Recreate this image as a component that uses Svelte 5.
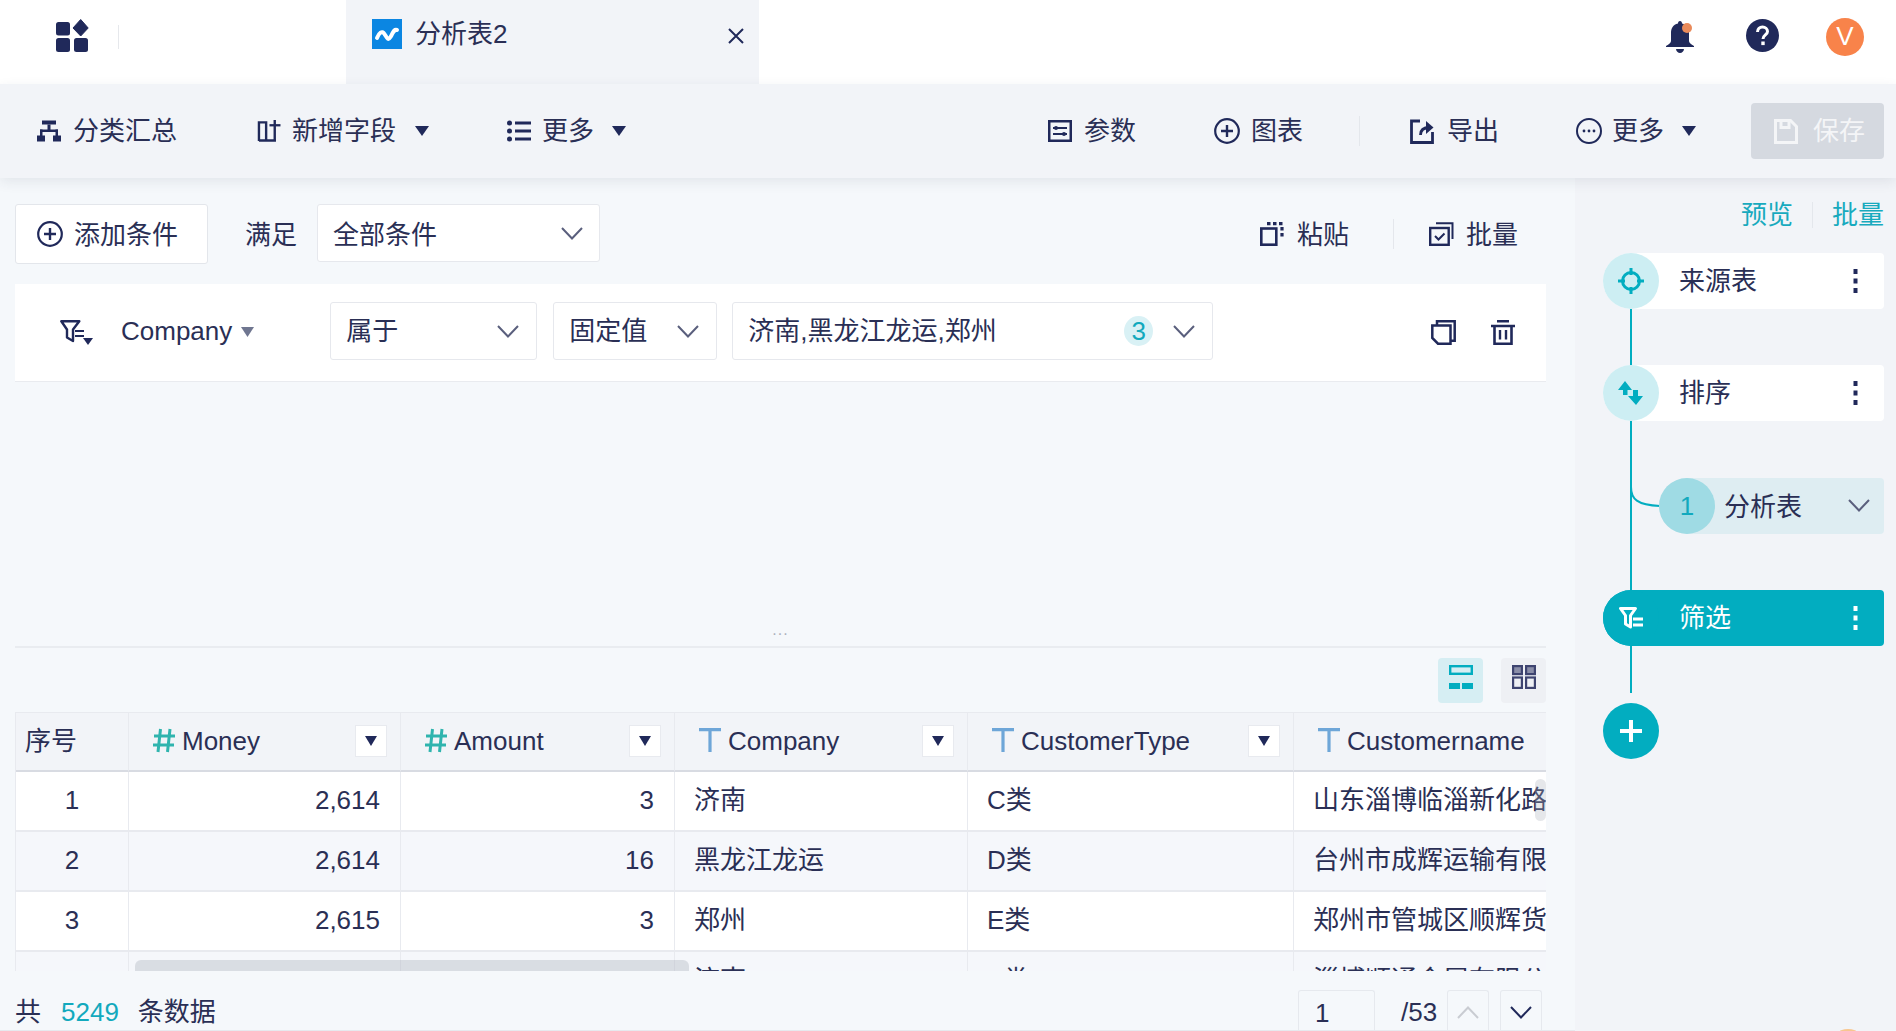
<script>
  const cols = [
    { name: 'Money', type: 'num', w: 272 },
    { name: 'Amount', type: 'num', w: 274 },
    { name: 'Company', type: 'text', w: 293 },
    { name: 'CustomerType', type: 'text', w: 326 },
    { name: 'Customername', type: 'text', w: 340, noMenu: true }
  ];
  const rows = [
    ['1', '2,614', '3', '济南', 'C类', '山东淄博临淄新化路运输有限公司'],
    ['2', '2,614', '16', '黑龙江龙运', 'D类', '台州市成辉运输有限公司'],
    ['3', '2,615', '3', '郑州', 'E类', '郑州市管城区顺辉货运有限公司'],
    ['4', '2,615', '3', '济南', 'F类', '淄博顺通金属有限公司']
  ];
</script>

{#snippet chevron(cls)}
  <svg class={cls} viewBox="0 0 22 13" fill="none" stroke="currentColor" stroke-width="2"><path d="M1 1l10 10.500L21 1"/></svg>
{/snippet}
{#snippet caret(cls)}
  <svg class="caret {cls}" viewBox="0 0 14 10"><path d="M0 0h14L7 10z" fill="#20295a"/></svg>
{/snippet}
{#snippet kebab(fill)}
  <svg class="kebab" viewBox="0 0 5 24" fill={fill}><rect x="0.500" y="0" width="4" height="5"/><rect x="0.500" y="9.500" width="4" height="5"/><rect x="0.500" y="19" width="4" height="5"/></svg>
{/snippet}

<div class="app">
  <header class="topbar">
    <div class="brand">
      <svg class="logo" viewBox="0 0 33 33" fill="#20295a">
        <rect x="0" y="3" width="14" height="13.500" rx="2.500"/>
        <rect x="18" y="19" width="14" height="14" rx="2.500"/>
        <rect x="0" y="19" width="14" height="14" rx="2.500"/>
        <path d="M24.700 0.500l7.500 8.500-7.500 8-7.700-8z" stroke="#20295a" stroke-linejoin="round"/>
      </svg>
      <span class="brand-rule"></span>
    </div>
    <div class="tab">
      <svg class="tab-icon" viewBox="0 0 30 30"><rect width="30" height="30" fill="#0b86e2"/><path d="M5 19c2-5 5-8 7.500-4s3.500 7 6 3 3-8 6.500-7" fill="none" stroke="#fff" stroke-width="4" stroke-linecap="round"/></svg>
      <span class="tab-title">分析表2</span>
      <svg class="tab-close" viewBox="0 0 16 16" fill="none" stroke="#20295a" stroke-width="2"><path d="M1 1l14 14M15 1L1 15"/></svg>
    </div>
    <div class="top-actions">
      <svg class="bell" viewBox="0 0 28 32"><path d="M14 0c1.400 0 2 1 2 2.500 5 1.200 7 5 7 9.500v8c0 2 2 3 5 5v1H0v-1c3-2 5-3 5-5v-8c0-4.500 2-8.300 7-9.500C12 1 12.600 0 14 0z" fill="#20295a"/><path d="M10 28h8c0 2-2 4-4 4s-4-2-4-4z" fill="#20295a"/><circle cx="21" cy="7" r="5" fill="#e98a5a"/></svg>
      <svg class="help" viewBox="0 0 33 33"><circle cx="16.500" cy="16.500" r="16.500" fill="#20295a"/><path d="M11.500 13c0-3 2.200-5 5-5s5 2 5 4.500c0 3.500-4.500 3.500-4.500 7.500" fill="none" stroke="#fff" stroke-width="3"/><rect x="15.300" y="22.500" width="3.400" height="3.600" fill="#fff"/></svg>
      <div class="avatar">V</div>
    </div>
  </header>

  <nav class="toolbar">
    <div class="tool-group">
      <div class="tool tool-sum">
        <svg class="ic" viewBox="0 0 24 21" fill="#20295a"><rect x="5" y="0" width="14" height="4"/><rect x="10.500" y="4" width="3" height="6"/><rect x="3" y="9" width="18" height="2.500"/><rect x="3" y="9" width="2.500" height="7"/><rect x="18.500" y="9" width="2.500" height="7"/><rect x="0" y="15" width="8" height="6"/><rect x="16" y="15" width="8" height="6"/></svg>
        <span>分类汇总</span>
      </div>
      <div class="tool tool-add">
        <svg class="ic" viewBox="0 0 24 23" fill="none" stroke="#20295a" stroke-width="2.500"><path d="M1.500 22V2.500h7.500v19M1.500 21.500h17.800M18 0v21.500"/><path d="M12.500 5.500H24" stroke-width="2.400"/></svg>
        <span>新增字段</span>
        {@render caret('caret-add')}
      </div>
      <div class="tool tool-more">
        <svg class="ic" viewBox="0 0 24 22" fill="#20295a"><circle cx="2.500" cy="3" r="2.500"/><circle cx="2.500" cy="11" r="2.500"/><circle cx="2.500" cy="19" r="2.500"/><rect x="8" y="1.500" width="16" height="3"/><rect x="8" y="9.500" width="16" height="3"/><rect x="8" y="17.500" width="16" height="3"/></svg>
        <span>更多</span>
        {@render caret('caret-more')}
      </div>
    </div>
    <div class="tool-group tool-right">
      <div class="tool tool-param">
        <svg class="ic" viewBox="0 0 24 22" fill="none" stroke="#20295a" stroke-width="2.500"><rect x="1.250" y="1.250" width="21.500" height="19.500"/><path d="M5 8h14M5 14h14" stroke-width="2"/><circle cx="8" cy="8" r="2" fill="#20295a" stroke="none"/><circle cx="16" cy="14" r="2" fill="#20295a" stroke="none"/></svg>
        <span>参数</span>
      </div>
      <div class="tool tool-chart">
        <svg class="ic ic-round" viewBox="0 0 26 26" fill="none" stroke="#20295a" stroke-width="2.200"><circle cx="13" cy="13" r="11.800"/><path d="M13 7v12M7 13h12" stroke-width="2.400"/></svg>
        <span>图表</span>
      </div>
      <span class="rule rule-tool"></span>
      <div class="tool tool-export">
        <svg class="ic ic-export" viewBox="0 0 24 25" fill="none" stroke="#20295a" stroke-width="2.800"><path d="M10 2H1.500v21.500H22.500V13"/><path d="M10.500 16c0-5 3-7.500 9-7.500"/><path d="M16 2l7.500 6.500-7.500 6.500z" fill="#20295a" stroke="none"/></svg>
        <span>导出</span>
      </div>
      <div class="tool tool-more2">
        <svg class="ic ic-round" viewBox="0 0 26 26" fill="none" stroke="#20295a" stroke-width="2"><circle cx="13" cy="13" r="12"/><g fill="#20295a" stroke="none"><circle cx="8" cy="13" r="1.400"/><circle cx="13" cy="13" r="1.400"/><circle cx="18" cy="13" r="1.400"/></g></svg>
        <span>更多</span>
        {@render caret('caret-more2')}
      </div>
      <button class="save">
        <svg class="ic" viewBox="0 0 24 25" fill="none" stroke="#f4f5f7" stroke-width="3"><path d="M1.500 1.500h15l6 6v16h-21z"/><path d="M7 2v6.500h8V2"/></svg>
        <span>保存</span>
      </button>
    </div>
  </nav>

  <div class="body">
    <main class="main">
      <div class="cond-head">
        <button class="add-btn">
          <svg class="ic-add" viewBox="0 0 26 26" fill="none" stroke="#20295a" stroke-width="2.200"><circle cx="13" cy="13" r="11.800"/><path d="M13 7v12M7 13h12" stroke-width="2.400"/></svg>
          <span>添加条件</span>
        </button>
        <span class="meet">满足</span>
        <div class="select sel-all"><span>全部条件</span>{@render chevron('chev')}</div>
        <div class="head-actions">
          <div class="tool">
            <svg class="ic ic-paste" viewBox="0 0 24 24" fill="none" stroke="#20295a" stroke-width="2.600"><rect x="1.300" y="6.500" width="15" height="16.200"/><path d="M7 1.700h3.500M13 1.700h3.500M19 1.700h3.500M22 5v3.500M22 11v3.500" stroke-width="3.200"/></svg>
            <span>粘贴</span>
          </div>
          <span class="rule rule-head"></span>
          <div class="tool tool-batch">
            <svg class="ic ic-batch" viewBox="0 0 25 24" fill="none" stroke="#20295a" stroke-width="2.400"><rect x="1.200" y="6" width="18.500" height="16.800"/><path d="M6 14l3.500 3.500 6-6" stroke-width="2"/><path d="M7 1.300h16.500V17" stroke-width="2"/></svg>
            <span>批量</span>
          </div>
        </div>
      </div>

      <section class="cond-card">
        <svg class="cond-icon" viewBox="0 0 33 25"><path d="M1.300 1.300h18L13 9.500v11.500l-6-3.500V9.500z" fill="none" stroke="#20295a" stroke-width="2.400" stroke-linejoin="round"/><path d="M15 11h9M15 16h9" stroke="#20295a" stroke-width="2.200"/><path d="M23 18h10l-5 7z" fill="#20295a"/></svg>
        <span class="field">Company</span>
        <svg class="field-caret" viewBox="0 0 13 10"><path d="M0 0h13L6.500 10z" fill="#6f7690"/></svg>
        <div class="select sel-op"><span>属于</span>{@render chevron('chev')}</div>
        <div class="select sel-kind"><span>固定值</span>{@render chevron('chev')}</div>
        <div class="select sel-val">
          <span class="val-text">济南,黑龙江龙运,郑州</span>
          <span class="badge">3</span>
          {@render chevron('chev')}
        </div>
        <svg class="act-copy" viewBox="0 0 25 25" fill="none" stroke="#20295a" stroke-width="2.500"><path d="M6 5V1.300h17.700v19.500H20"/><path d="M1.300 5.500H19.500v18.200H7l-5.700-5.700z"/></svg>
        <svg class="act-del" viewBox="0 0 24 25" fill="none" stroke="#20295a" stroke-width="2.600"><path d="M6 1.300h12M0 6h24" /><path d="M3.500 7v16.700h17V7"/><path d="M9 10v9.500M15 10v9.500" stroke-width="2.400"/></svg>
      </section>

      <div class="splitter"><span>...</span></div>

      <div class="views">
        <div class="view view-on">
          <svg viewBox="0 0 24 24" width="24" height="24"><rect x="1.200" y="1.200" width="21.600" height="7.600" fill="#d6eef3" stroke="#02adc0" stroke-width="2.400"/><rect x="0" y="18" width="11" height="6" fill="#02adc0"/><rect x="13" y="18" width="11" height="6" fill="#02adc0"/></svg>
        </div>
        <div class="view">
          <svg viewBox="0 0 24 24" width="24" height="24" fill="none" stroke="#3e4470" stroke-width="2.200"><rect x="1.100" y="1.100" width="8.800" height="8" fill="#8a8ea8"/><rect x="14.100" y="1.100" width="8.800" height="8" fill="#8a8ea8"/><rect x="1.100" y="12.500" width="8.800" height="10.400"/><rect x="14.100" y="12.500" width="8.800" height="10.400"/></svg>
        </div>
      </div>

      <div class="table-wrap">
        <table>
          <colgroup>
            <col style="width:113px" />
            {#each cols as c}<col style="width:{c.w}px" />{/each}
          </colgroup>
          <thead>
            <tr>
              <th class="th-idx">序号</th>
              {#each cols as c}
                <th>
                  <div class="th-in">
                    {#if c.type === 'num'}
                      <svg class="type-ic" viewBox="0 0 22 25" fill="none" stroke="#2fb4ae" stroke-width="3"><path d="M7.500 1L5 24M17 1l-2.500 23M1 8h21M0 17h21"/></svg>
                    {:else}
                      <svg class="type-ic" viewBox="0 0 22 25" fill="none" stroke="#6ea6d8" stroke-width="3.200"><path d="M0 1.600h22M11 1.600V24"/></svg>
                    {/if}
                    <span class="th-name">{c.name}</span>
                    {#if !c.noMenu}
                      <span class="th-menu"><svg viewBox="0 0 12 10" width="12" height="10"><path d="M0 0h12L6 10z" fill="#20295a"/></svg></span>
                    {/if}
                  </div>
                </th>
              {/each}
            </tr>
          </thead>
          <tbody>
            {#each rows as r, i}
              <tr class:even={i % 2 === 1}>
                <td class="idx">{r[0]}</td>
                <td class="num">{r[1]}</td>
                <td class="num">{r[2]}</td>
                <td class="txt">{r[3]}</td>
                <td class="txt">{r[4]}</td>
                <td class="txt">{r[5]}</td>
              </tr>
            {/each}
          </tbody>
        </table>
        <span class="scroll-h"></span>
        <span class="scroll-v"></span>
      </div>

      <footer class="foot">
        <span>共</span><span class="count">5249</span><span>条数据</span>
        <div class="pager">
          <div class="page-input">1</div>
          <span class="page-total">/53</span>
          <div class="page-btn up">{@render chevron('chev-p')}</div>
          <div class="page-btn down">{@render chevron('chev-p')}</div>
        </div>
      </footer>
    </main>

    <aside class="side">
      <div class="side-head">
        <span>预览</span><span class="rule rule-side"></span><span>批量</span>
      </div>
      <div class="flow">
        <span class="flow-line"></span>
        <svg class="flow-branch" viewBox="0 0 30 22" fill="none" stroke="#02adc0" stroke-width="2"><path d="M1 0c0 12 6 18 29 19"/></svg>
        <div class="node">
          <span class="disc">
            <svg viewBox="0 0 26 26" width="26" height="26" fill="none" stroke="#02adc0" stroke-width="3"><circle cx="13" cy="13" r="8.500"/><path d="M13 0v7M13 19v7M0 13h7M19 13h7"/></svg>
          </span>
          <span class="node-label">来源表</span>
          {@render kebab('#20295a')}
        </div>
        <div class="node">
          <span class="disc">
            <svg viewBox="0 0 26 26" width="26" height="26" fill="#02adc0"><path d="M7 1l7 9H9.500v5H5v-5H0z"/><path d="M18 25l-8-9h5v-6h5v6h5z"/></svg>
          </span>
          <span class="node-label">排序</span>
          {@render kebab('#20295a')}
        </div>
        <div class="node node-sub">
          <span class="disc disc-sub">1</span>
          <span class="node-label sub-label">分析表</span>
          {@render chevron('chev-sub')}
        </div>
        <div class="node node-on">
          <span class="disc disc-on">
            <svg viewBox="0 0 25 22" width="25" height="22"><path d="M1.500 1.500h15l-5 7v11.500l-5-3v-8.500z" fill="none" stroke="#fff" stroke-width="3" stroke-linejoin="round"/><path d="M14 12h10M14 18h10" stroke="#fff" stroke-width="3"/></svg>
          </span>
          <span class="node-label">筛选</span>
          {@render kebab('#fff')}
        </div>
        <div class="add-node">
          <svg viewBox="0 0 24 24" width="24" height="24" stroke="#fff" stroke-width="4"><path d="M12 1v22M1 12h22"/></svg>
        </div>
      </div>
    </aside>
  </div>
  <span class="float-dot"></span>
</div>

<style>
  :global(body) { margin: 0; background: #fff; }
  .app {
    position: relative;
    width: 1896px;
    height: 1031px;
    overflow: hidden;
    display: flex;
    flex-direction: column;
    font-family: "Liberation Sans", "Noto Sans CJK SC", sans-serif;
    font-size: 26px;
    line-height: 36px;
    color: #2a2f55;
    background: #fff;
  }
  svg { display: block; flex: none; }

  .topbar { height: 84px; flex: none; display: flex; background: #fff; }
  .brand { width: 346px; padding: 19px 0 0 56px; display: flex; box-sizing: border-box; }
  .logo { width: 33px; height: 33px; }
  .brand-rule { width: 1px; height: 24px; margin: 6px 0 0 29px; background: #e6e8ec; }
  .tab { width: 413px; height: 84px; background: #f2f4f8; display: flex; padding: 19px 0 0 26px; box-sizing: border-box; }
  .tab-icon { width: 30px; height: 30px; }
  .tab-title { margin: -3px 0 0 13px; width: 313px; }
  .tab-close { width: 16px; height: 16px; margin-top: 9px; }
  .top-actions { margin-left: auto; display: flex; padding: 18px 32px 0 0; height: 38px; }
  .bell { width: 28px; height: 32px; margin-top: 3px; }
  .help { width: 33px; height: 33px; margin: 1px 0 0 52px; }
  .avatar { width: 38px; height: 38px; border-radius: 50%; background: #f8834a; color: #fff; text-align: center; margin-left: 47px; line-height: 36px; font-size: 26px; }

  .toolbar { height: 94px; flex: none; display: flex; background: #f2f4f8; box-shadow: 0 4px 12px rgba(40, 50, 80, .09); position: relative; z-index: 2; justify-content: space-between; align-items: center; padding: 0 12px 0 37px; }
  .tool-group { display: flex; align-items: center; }
  .tool { display: flex; align-items: center; gap: 13px; }
  .tool-sum { gap: 12px; }
  .ic { width: 24px; height: 22px; }
  .ic-round { width: 26px; height: 26px; }
  .ic-export { height: 25px; }
  .caret { width: 14px; height: 10px; margin-left: 5px; }
  .caret-add { margin-left: 8px; }
  .caret-more { margin-left: 7px; }
  .caret-more2 { margin-left: 8px; }
  .tool-add { margin-left: 80px; gap: 11px; }
  .tool-more { margin-left: 78px; gap: 11px; }
  .tool-param { gap: 12px; }
  .tool-chart { margin-left: 78px; gap: 11px; }
  .tool-export { margin-left: 50px; }
  .tool-more2 { margin-left: 77px; gap: 10px; }
  .rule { display: block; width: 1px; background: #e4e7ec; }
  .rule-tool { height: 30px; margin-left: 56px; }
  .save { margin-left: 55px; width: 133px; height: 56px; border: 0; border-radius: 4px; background: #d5d9e0; color: #f4f5f7; font: inherit; display: flex; align-items: center; padding: 0 0 0 23px; gap: 15px; }
  .save .ic { height: 25px; }

  .body { flex: 1; display: flex; min-height: 0; }
  .main { width: 1575px; flex: none; box-sizing: border-box; padding: 0 29px 0 15px; background: #f5f8fb; display: flex; flex-direction: column; border-bottom: 1px solid #e6e9ee; }
  .cond-head { margin-top: 26px; height: 60px; display: flex; align-items: center; flex: none; }
  .add-btn { width: 193px; height: 60px; box-sizing: border-box; background: #fff; border: 1px solid #e3e6eb; border-radius: 3px; font: inherit; color: inherit; display: flex; align-items: center; padding: 0 0 0 21px; gap: 11px; }
  .add-btn span { margin-top: 2px; }
  .ic-add { width: 26px; height: 26px; }
  .meet { margin: 2px 0 0 37px; }
  .select { box-sizing: border-box; height: 58px; background: #fff; border: 1px solid #e6e8ed; border-radius: 3px; display: flex; align-items: center; padding: 0 17px 0 15px; justify-content: space-between; color: inherit; }
  .sel-all { width: 283px; margin: -2px 0 0 20px; padding-right: 16px; }
  .sel-all span { margin-top: 4px; }
  .chev { width: 22px; height: 13px; color: #5a5f7d; }
  .head-actions { margin-left: auto; display: flex; align-items: center; padding-right: 28px; }
  .head-actions span:not(.rule) { margin-top: 2px; }
  .head-actions .ic { height: 24px; width: 23px; }
  .head-actions .ic-paste { width: 24px; }
  .rule-head { height: 30px; margin-left: 44px; }
  .tool-batch { margin-left: 35px; gap: 12px; }
  .head-actions .ic-batch { width: 25px; }

  .cond-card { margin-top: 20px; height: 98px; flex: none; box-sizing: border-box; background: #fff; border-bottom: 1px solid #e9ebef; display: flex; align-items: center; padding-left: 45px; }
  .cond-icon { width: 33px; height: 25px; }
  .field { margin: -4px 0 0 28px; }
  .field-caret { width: 13px; height: 10px; margin: -2px 0 0 9px; }
  .cond-card .select { margin-top: -3px; }
  .cond-card .sel-op { width: 207px; margin-left: 76px; }
  .cond-card .sel-kind { width: 164px; margin-left: 16px; }
  .cond-card .sel-val { width: 481px; margin-left: 15px; padding-right: 17px; }
  .val-text { margin-right: auto; }
  .badge { width: 29px; height: 30px; border-radius: 50%; background: #d9f1f5; color: #12a9bd; text-align: center; line-height: 30px; margin-right: 20px; }
  .act-copy { width: 25px; height: 25px; margin: 0 0 0 218px; }
  .act-del { width: 24px; height: 25px; margin-left: 35px; }

  .splitter { height: 266px; flex: none; box-sizing: border-box; border-bottom: 2px solid #e9ecf0; position: relative; display: flex; justify-content: center; align-items: flex-end; color: #aeb2bd; font-size: 16px; line-height: 22px; }
  .splitter span { letter-spacing: 1px; margin-bottom: 5px; }

  .views { display: flex; justify-content: flex-end; gap: 18px; margin-top: 10px; flex: none; }
  .view { width: 45px; height: 45px; border-radius: 4px; background: #eef0f4; display: flex; align-items: center; justify-content: center; padding-bottom: 7px; box-sizing: border-box; }
  .view-on { background: #d6eef3; }

  .table-wrap { margin-top: 9px; height: 259px; flex: none; position: relative; overflow: hidden; border-left: 1px solid #e8eaef; box-sizing: border-box; }
  table { border-collapse: separate; border-spacing: 0; table-layout: fixed; width: 1618px; }
  th { height: 60px; box-sizing: border-box; padding: 0 0 2px; font-weight: 400; text-align: left; background: #f2f4f8; border-top: 1px solid #e8eaef; border-right: 1px solid #e8eaef; border-bottom: 2px solid #d8dbe2; }
  .th-idx { padding-left: 9px; }
  .th-in { display: flex; align-items: center; padding: 0 13px 0 24px; }
  .type-ic { width: 22px; height: 25px; }
  .th-name { margin-left: 7px; margin-right: auto; }
  .th-menu { width: 32px; height: 32px; box-sizing: border-box; background: #fff; border: 1px solid #e8eaef; display: flex; align-items: center; justify-content: center; }
  td { height: 60px; box-sizing: border-box; padding: 0 20px 2px 19px; background: #fff; border-right: 1px solid #e8eaef; border-bottom: 2px solid #e8eaef; white-space: nowrap; overflow: hidden; }
  tr.even td { background: #f5f7fb; }
  td.idx { text-align: center; padding: 0 0 2px; }
  td.num { text-align: right; }
  .scroll-h { position: absolute; left: 119px; top: 248px; width: 554px; height: 16px; border-radius: 6px; background: rgba(170, 174, 185, .36); }
  .scroll-v { position: absolute; right: 0; top: 67px; width: 11px; height: 42px; border-radius: 6px; background: rgba(170, 174, 185, .3); }

  .foot { flex: 1; min-height: 0; display: flex; align-items: flex-end; }
  .foot > span { line-height: 36px; }
  .count { color: #12a9bd; margin: 0 19px 0 20px; }
  .pager { margin-left: auto; margin-right: 4px; display: flex; align-items: stretch; height: 40px; }
  .page-input { width: 77px; box-sizing: border-box; border: 1px solid #e6e9ee; border-bottom: 0; padding-left: 16px; line-height: 44px; border-radius: 3px 3px 0 0; }
  .page-total { margin-left: 26px; line-height: 44px; width: 46px; }
  .page-btn { width: 42px; box-sizing: border-box; border: 1px solid #e6e9ee; border-bottom: 0; border-radius: 3px 3px 0 0; display: flex; align-items: center; justify-content: center; padding-top: 3px; }
  .down { margin-left: 11px; color: #20295a; }
  .up { color: #c9ccd2; }
  .up :global(svg) { transform: rotate(180deg); }
  .chev-p { width: 22px; height: 13px; }

  .side { flex: 1; background: #f2f4f8; padding: 22px 12px 0 28px; display: flex; flex-direction: column; }
  .side-head { display: flex; justify-content: flex-end; align-items: center; color: #18aabe; height: 30px; flex: none; }
  .rule-side { height: 26px; margin: 0 19px 0 19px; }
  .flow { position: relative; margin-top: 23px; display: flex; flex-direction: column; gap: 56.4px; }
  .flow-line { position: absolute; left: 27px; top: 40px; width: 2px; height: 400px; background: #02adc0; }
  .flow-branch { position: absolute; left: 27px; top: 234px; width: 30px; height: 22px; }
  .node { position: relative; height: 56px; display: flex; align-items: center; background: #fff; border-radius: 28px 4px 4px 28px; padding-right: 26px; }
  .disc { width: 56px; height: 56px; flex: none; border-radius: 50%; background: #cdeef3; display: flex; align-items: center; justify-content: center; }
  .node-label { margin-left: 20px; margin-right: auto; }
  .kebab { width: 5px; height: 24px; }
  .node-sub { margin-left: 56px; background: #deedf2; padding-right: 14px; }
  .disc-sub { background: #9fdbe4; color: #12a9bd; }
  .sub-label { margin: 2px auto 0 9px; }
  .chev-sub { width: 22px; height: 13px; color: #5a5f7d; }
  .node-on { background: #02adc0; color: #fff; }
  .disc-on { background: #02adc0; }
  .add-node { width: 56px; height: 56px; border-radius: 50%; background: #02adc0; display: flex; align-items: center; justify-content: center; }
  .float-dot { position: absolute; left: 1830px; top: 1029px; width: 36px; height: 36px; border-radius: 50%; background: #f8c68f; }
</style>
